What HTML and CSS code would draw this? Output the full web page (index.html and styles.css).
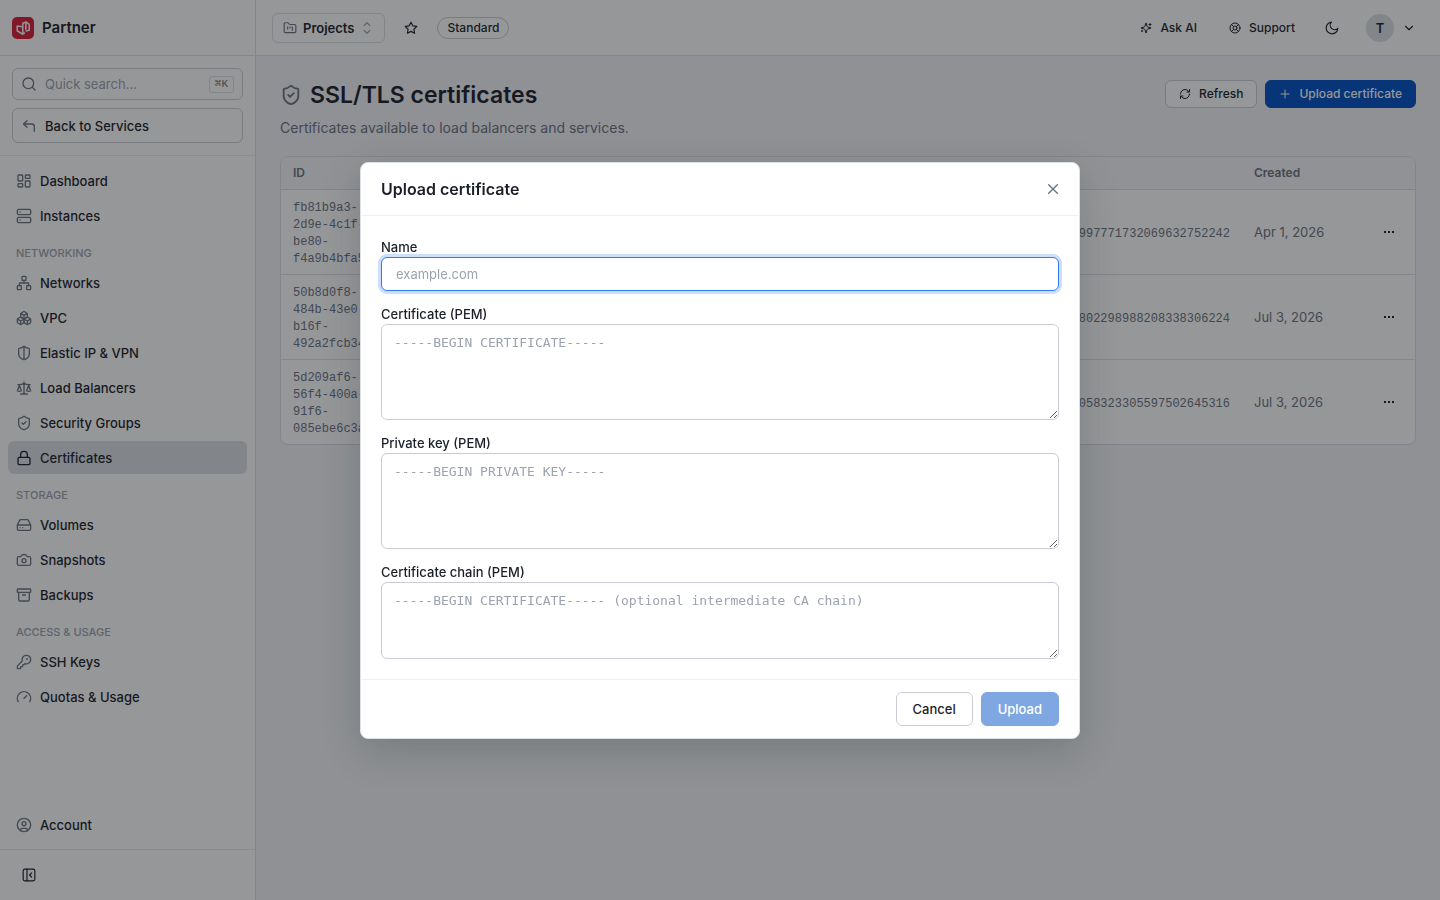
FILE: index.html
```html
<!DOCTYPE html>
<html lang="en">
<head>
<meta charset="utf-8">
<meta name="viewport" content="width=device-width, initial-scale=1">
<title>SSL/TLS certificates</title>
<link rel="stylesheet" href="styles.css">
</head>
<body>
<div class="app">
  <aside class="sidebar">
    <div class="brand">
      <svg class="brand-logo" viewBox="0 0 22 22" aria-hidden="true"><rect width="22" height="22" rx="5" fill="#d81e34"/><path d="M10.500 9.800 5.200 9v4.800l5.500 3.400 1.700-1.200M10.800 17V6.200L14 5l3.200 2.300v5.900l-3 .8M13.800 6v6.300" fill="none" stroke="#f4f4f6" stroke-width="1.600" stroke-linejoin="round" stroke-linecap="round"/></svg>
      <span>Partner</span>
    </div>
    <div class="side-tools">
      <label class="search">
        <svg class="icon" viewBox="0 0 24 24"><circle cx="11" cy="11" r="8"/><path d="m21 21-4.300-4.300"/></svg>
        <input type="search" placeholder="Quick search..." aria-label="Quick search">
        <kbd>⌘K</kbd>
      </label>
      <a class="back" href="#services">
        <svg class="icon" viewBox="0 0 24 24"><path d="M20 20v-7a4 4 0 0 0-4-4H4"/><path d="M9 14 4 9l5-5"/></svg>
        Back to Services
      </a>
    </div>
    <nav class="nav">
      <a class="nav-item" href="#dashboard"><svg class="icon" viewBox="0 0 24 24"><rect x="3" y="3" width="7" height="9" rx="1"/><rect x="14" y="3" width="7" height="5" rx="1"/><rect x="14" y="12" width="7" height="9" rx="1"/><rect x="3" y="16" width="7" height="5" rx="1"/></svg>Dashboard</a>
      <a class="nav-item" href="#instances"><svg class="icon" viewBox="0 0 24 24"><rect x="2" y="2" width="20" height="8" rx="2"/><rect x="2" y="14" width="20" height="8" rx="2"/><path d="M6 6h.01M6 18h.01"/></svg>Instances</a>
      <h2 class="nav-label">Networking</h2>
      <a class="nav-item" href="#networks"><svg class="icon" viewBox="0 0 24 24"><rect x="16" y="16" width="6" height="6" rx="1"/><rect x="2" y="16" width="6" height="6" rx="1"/><rect x="9" y="2" width="6" height="6" rx="1"/><path d="M5 16v-3a1 1 0 0 1 1-1h12a1 1 0 0 1 1 1v3M12 12V8"/></svg>Networks</a>
      <a class="nav-item" href="#vpc"><svg class="icon" viewBox="0 0 24 24"><path d="M2.970 12.920A2 2 0 0 0 2 14.630v3.240a2 2 0 0 0 .97 1.710l3 1.800a2 2 0 0 0 2.060 0L12 19v-5.500l-5-3-4.030 2.420Z"/><path d="m7 16.500-4.740-2.850M7 16.500l5-3M7 16.500v5.170M12 13.500V19l3.970 2.380a2 2 0 0 0 2.060 0l3-1.800a2 2 0 0 0 .97-1.710v-3.240a2 2 0 0 0-.97-1.710L17 10.500l-5 3ZM17 16.500l-5-3M17 16.500l4.740-2.850M17 16.500v5.170"/><path d="M7.970 4.420A2 2 0 0 0 7 6.130v4.370l5 3 5-3V6.130a2 2 0 0 0-.97-1.710l-3-1.800a2 2 0 0 0-2.060 0l-3 1.800ZM12 8 7.260 5.150M12 8l4.740-2.850M12 13.500V8"/></svg>VPC</a>
      <a class="nav-item" href="#vpn"><svg class="icon" viewBox="0 0 24 24"><path d="M20 13c0 5-3.500 7.500-7.660 8.950a1 1 0 0 1-.67-.01C7.500 20.500 4 18 4 13V6a1 1 0 0 1 1-1c2 0 4.500-1.200 6.240-2.720a1.170 1.170 0 0 1 1.520 0C14.510 3.810 17 5 19 5a1 1 0 0 1 1 1zM12 22V2"/></svg>Elastic IP &amp; VPN</a>
      <a class="nav-item" href="#balancers"><svg class="icon" viewBox="0 0 24 24"><path d="m16 16 3-8 3 8c-.87.65-1.920 1-3 1s-2.130-.35-3-1ZM2 16l3-8 3 8c-.87.65-1.920 1-3 1s-2.130-.35-3-1ZM7 21h10M12 3v18M3 7h2c2 0 5-1 7-2 2 1 5 2 7 2h2"/></svg>Load Balancers</a>
      <a class="nav-item" href="#security"><svg class="icon" viewBox="0 0 24 24"><path d="M20 13c0 5-3.500 7.500-7.660 8.950a1 1 0 0 1-.67-.01C7.500 20.500 4 18 4 13V6a1 1 0 0 1 1-1c2 0 4.500-1.200 6.240-2.720a1.170 1.170 0 0 1 1.520 0C14.510 3.810 17 5 19 5a1 1 0 0 1 1 1z"/><path d="m9 12 2 2 4-4"/></svg>Security Groups</a>
      <a class="nav-item active" aria-current="page" href="#certificates"><svg class="icon" viewBox="0 0 24 24"><rect x="3" y="11" width="18" height="11" rx="2"/><path d="M7 11V7a5 5 0 0 1 10 0v4"/></svg>Certificates</a>
      <h2 class="nav-label">Storage</h2>
      <a class="nav-item" href="#volumes"><svg class="icon" viewBox="0 0 24 24"><path d="M22 12H2M5.450 5.110 2 12v6a2 2 0 0 0 2 2h16a2 2 0 0 0 2-2v-6l-3.450-6.890A2 2 0 0 0 16.760 4H7.240a2 2 0 0 0-1.790 1.110zM6 16h.01M10 16h.01"/></svg>Volumes</a>
      <a class="nav-item" href="#snapshots"><svg class="icon" viewBox="0 0 24 24"><path d="M14.500 4h-5L7 7H4a2 2 0 0 0-2 2v9a2 2 0 0 0 2 2h16a2 2 0 0 0 2-2V9a2 2 0 0 0-2-2h-3z"/><circle cx="12" cy="13" r="3"/></svg>Snapshots</a>
      <a class="nav-item" href="#backups"><svg class="icon" viewBox="0 0 24 24"><rect x="2" y="3" width="20" height="5" rx="1"/><path d="M4 8v11a2 2 0 0 0 2 2h12a2 2 0 0 0 2-2V8M10 12h4"/></svg>Backups</a>
      <h2 class="nav-label">Access &amp; Usage</h2>
      <a class="nav-item" href="#keys"><svg class="icon" viewBox="0 0 24 24"><path d="M2.590 17.410A2 2 0 0 0 2 18.830V21a1 1 0 0 0 1 1h3a1 1 0 0 0 1-1v-1a1 1 0 0 1 1-1h1a1 1 0 0 0 1-1v-1a1 1 0 0 1 1-1h.17a2 2 0 0 0 1.410-.59l.82-.81a6.500 6.500 0 1 0-4-4z"/><circle cx="16.500" cy="7.500" r=".5"/></svg>SSH Keys</a>
      <a class="nav-item" href="#quotas"><svg class="icon" viewBox="0 0 24 24"><path d="m12 14 4-4M3.340 19a10 10 0 1 1 17.320 0"/></svg>Quotas &amp; Usage</a>
      <a class="nav-item nav-account" href="#account"><svg class="icon" viewBox="0 0 24 24"><circle cx="12" cy="12" r="10"/><circle cx="12" cy="10" r="3"/><path d="M7 20.660V19a2 2 0 0 1 2-2h6a2 2 0 0 1 2 2v1.660"/></svg>Account</a>
    </nav>
    <div class="side-foot">
      <button class="icon-btn" aria-label="Collapse sidebar"><svg class="icon icon-14" viewBox="0 0 24 24"><rect x="2" y="2" width="20" height="20" rx="3"/><path d="M8.500 2v20M16.500 8.500 13 12l3.500 3.500"/></svg></button>
    </div>
  </aside>

  <div class="main">
    <header class="topbar">
      <button class="project">
        <svg class="icon icon-14" viewBox="0 0 24 24"><path d="M4 20h16a2 2 0 0 0 2-2V8a2 2 0 0 0-2-2h-7.930a2 2 0 0 1-1.660-.9l-.82-1.200A2 2 0 0 0 7.930 3H4a2 2 0 0 0-2 2v13c0 1.100.9 2 2 2ZM8 10v4M12 10v2M16 10v6"/></svg>
        Projects
        <svg class="icon icon-14 muted" viewBox="0 0 24 24"><path d="m7 8 5-5 5 5M7 16l5 5 5-5"/></svg>
      </button>
      <button class="icon-btn star" aria-label="Add to favourites"><svg class="icon icon-14" viewBox="0 0 24 24"><path d="m12 2 3.090 6.260L22 9.270l-5 4.870 1.180 6.880L12 17.770l-6.180 3.250L7 14.140 2 9.270l6.910-1.010z"/></svg></button>
      <span class="badge">Standard</span>
      <div class="top-actions">
        <button class="ghost"><svg class="icon icon-12" viewBox="0 0 24 24"><path d="M9.940 15.500A2 2 0 0 0 8.500 14.060l-6.140-1.580a.5.5 0 0 1 0-.96L8.500 9.940A2 2 0 0 0 9.940 8.500l1.580-6.140a.5.5 0 0 1 .96 0l1.580 6.140a2 2 0 0 0 1.440 1.440l6.140 1.580a.5.5 0 0 1 0 .96l-6.140 1.580a2 2 0 0 0-1.440 1.440l-1.580 6.140a.5.5 0 0 1-.96 0zM20 3v4M22 5h-4M4 17v2M5 18H3"/></svg>Ask AI</button>
        <button class="ghost"><svg class="icon icon-12" viewBox="0 0 24 24"><circle cx="12" cy="12" r="10"/><circle cx="12" cy="12" r="4"/><path d="m4.930 4.930 4.240 4.240M14.830 9.170l4.240-4.240M14.830 14.830l4.240 4.240M9.170 14.830l-4.240 4.240"/></svg>Support</button>
        <button class="icon-btn" aria-label="Toggle dark mode"><svg class="icon icon-14" viewBox="0 0 24 24"><path d="M11 2a7.500 7.500 0 0 0 11 10.500A10 10 0 1 1 11 2Z"/></svg></button>
        <button class="user" aria-label="User menu"><span class="avatar">T</span><svg class="icon icon-14" viewBox="0 0 24 24"><path d="m6 9 6 6 6-6"/></svg></button>
      </div>
    </header>

    <main class="content">
      <div class="page-head">
        <div>
          <h1><svg class="icon icon-22" viewBox="0 0 24 24"><path d="M20 13c0 5-3.500 7.500-7.660 8.950a1 1 0 0 1-.67-.01C7.500 20.500 4 18 4 13V6a1 1 0 0 1 1-1c2 0 4.500-1.200 6.240-2.720a1.170 1.170 0 0 1 1.520 0C14.510 3.810 17 5 19 5a1 1 0 0 1 1 1z"/><path d="m9 12 2 2 4-4"/></svg>SSL/TLS certificates</h1>
          <p>Certificates available to load balancers and services.</p>
        </div>
        <div class="head-actions">
          <button class="btn btn-small"><svg class="icon icon-12" viewBox="0 0 24 24"><path d="M3 12a9 9 0 0 1 9-9 9.750 9.750 0 0 1 6.740 2.740L21 8M21 3v5h-5M21 12a9 9 0 0 1-9 9 9.750 9.750 0 0 1-6.740-2.740L3 16M8 16H3v5"/></svg>Refresh</button>
          <button class="btn btn-small btn-primary"><svg class="icon icon-12" viewBox="0 0 24 24"><path d="M4 12h16M12 4v16"/></svg>Upload certificate</button>
        </div>
      </div>
      <div class="table-card">
        <table>
          <thead><tr><th class="col-id">ID</th><th></th><th class="col-date">Created</th><th class="col-menu"></th></tr></thead>
          <tbody>
            <tr><td class="id">fb81b9a3-2d9e-4c1f-be80-f4a9b4bfa5</td><td class="serial">997771732069632752242</td><td>Apr 1, 2026</td><td class="menu"><button class="icon-btn" aria-label="Row actions"><svg class="dots" viewBox="0 0 12 4"><path d="M1 1h2v2H1zM5 1h2v2H5zM9 1h2v2H9z"/></svg></button></td></tr>
            <tr><td class="id">50b8d0f8-484b-43e0-b16f-492a2fcb34</td><td class="serial">802298988208338306224</td><td>Jul 3, 2026</td><td class="menu"><button class="icon-btn" aria-label="Row actions"><svg class="dots" viewBox="0 0 12 4"><path d="M1 1h2v2H1zM5 1h2v2H5zM9 1h2v2H9z"/></svg></button></td></tr>
            <tr><td class="id">5d209af6-56f4-400a-91f6-085ebe6c3a</td><td class="serial">058323305597502645316</td><td>Jul 3, 2026</td><td class="menu"><button class="icon-btn" aria-label="Row actions"><svg class="dots" viewBox="0 0 12 4"><path d="M1 1h2v2H1zM5 1h2v2H5zM9 1h2v2H9z"/></svg></button></td></tr>
          </tbody>
        </table>
      </div>
    </main>
  </div>
</div>

<div class="overlay">
  <form class="modal" role="dialog" aria-modal="true" aria-labelledby="modal-title">
    <header class="modal-head">
      <h2 id="modal-title">Upload certificate</h2>
      <button type="button" class="close" aria-label="Close"><svg class="icon" viewBox="0 0 24 24"><path d="M18.500 5.500l-13 13M5.500 5.500l13 13"/></svg></button>
    </header>
    <div class="modal-body">
      <div class="field"><label for="name">Name</label><input id="name" type="text" placeholder="example.com" autofocus></div>
      <div class="field"><label for="cert">Certificate (PEM)</label><textarea id="cert" rows="4" placeholder="-----BEGIN CERTIFICATE-----"></textarea></div>
      <div class="field"><label for="key">Private key (PEM)</label><textarea id="key" rows="4" placeholder="-----BEGIN PRIVATE KEY-----"></textarea></div>
      <div class="field"><label for="chain">Certificate chain (PEM)</label><textarea id="chain" rows="3" placeholder="-----BEGIN CERTIFICATE----- (optional intermediate CA chain)"></textarea></div>
    </div>
    <footer class="modal-foot">
      <button type="button" class="btn">Cancel</button>
      <button type="submit" class="btn btn-primary" disabled>Upload</button>
    </footer>
  </form>
</div>
</body>
</html>
```
FILE: styles.css
```css
* { box-sizing: border-box; }

body {
  margin: 0;
  font: 500 13px/20px Inter, "Liberation Sans", sans-serif;
  color: #1c1f2a;
  background: #f4f5f7;
}

button, input, textarea { font: inherit; color: inherit; }
button { cursor: pointer; padding: 0; border: 0; background: none; }
a { color: inherit; text-decoration: none; }
h1, h2, p { margin: 0; }

.icon {
  width: 16px;
  height: 16px;
  flex: none;
  fill: none;
  stroke: currentColor;
  stroke-width: 2;
  stroke-linecap: round;
  stroke-linejoin: round;
}
.icon-12 { width: 12px; height: 12px; }
.icon-14 { width: 14px; height: 14px; }
.icon-22 { width: 22px; height: 22px; }

.app { display: flex; min-height: 100vh; }

/* Sidebar */
.sidebar {
  width: 256px;
  flex: none;
  display: flex;
  flex-direction: column;
  background: #fff;
  border-right: 1px solid #dcdfe3;
}
.brand {
  height: 56px;
  display: flex;
  align-items: center;
  gap: 8px;
  padding: 0 12px;
  border-bottom: 1px solid #dcdfe3;
  font-size: 15px;
  font-weight: 600;
}
.brand-logo { width: 22px; height: 22px; }
.side-tools {
  display: flex;
  flex-direction: column;
  gap: 8px;
  padding: 12px;
  border-bottom: 1px solid #e9ebee;
}
.search, .back {
  display: flex;
  align-items: center;
  gap: 8px;
  padding: 0 8px;
  border: 1px solid #c9cdd3;
  border-radius: 6px;
}
.search { height: 32px; }
.search .icon, .back .icon, .nav-item .icon { color: #6b7280; }
.search input {
  flex: 1;
  min-width: 0;
  padding: 0;
  border: 0;
  outline: 0;
  background: none;
  font-weight: 400;
}
.search input::placeholder { color: #9ca3af; }
kbd {
  padding: 0 5px;
  border: 1px solid #dcdfe3;
  border-radius: 3px;
  font: 11px/15px "Liberation Mono", monospace;
  color: #6b7280;
}
.back { height: 35px; }

.nav {
  flex: 1;
  display: flex;
  flex-direction: column;
  gap: 2px;
  padding: 8px;
}
.nav-item {
  height: 33px;
  display: flex;
  align-items: center;
  gap: 8px;
  padding: 0 8px;
  border-radius: 6px;
}
.nav-item.active { background: #dce1e4; }
.nav-item.active .icon { color: #1c1f2a; }
.nav-label {
  padding: 10px 8px 2px;
  font-size: 11px;
  line-height: 18px;
  font-weight: 500;
  text-transform: uppercase;
  color: #9ca3af;
}
.nav-account { margin-top: auto; }
.side-foot {
  height: 51px;
  padding: 9px 13px;
  border-top: 1px solid #e9ebee;
}
.icon-btn {
  width: 32px;
  height: 32px;
  display: inline-flex;
  align-items: center;
  justify-content: center;
}

/* Top bar */
.main { flex: 1; min-width: 0; }
.topbar {
  height: 56px;
  display: flex;
  align-items: center;
  padding: 0 16px;
  background: #fff;
  border-bottom: 1px solid #dcdfe3;
}
.project {
  height: 30px;
  display: flex;
  align-items: center;
  gap: 6px;
  padding: 0 10px;
  border: 1px solid #dcdfe3;
  border-radius: 6px;
  font-weight: 600;
}
.project .icon { color: #6b7280; }
.project .muted { color: #9ca3af; }
.star { margin: 0 10px; }
.badge {
  padding: 0 9px;
  border: 1px solid #c9cdd3;
  border-radius: 11px;
  font-size: 12px;
}
.top-actions {
  margin-left: auto;
  display: flex;
  align-items: center;
  gap: 10px;
}
.ghost {
  height: 28px;
  display: flex;
  align-items: center;
  gap: 8px;
  padding: 0 11px;
  font-size: 12px;
}
.user {
  display: flex;
  align-items: center;
  gap: 8px;
  padding: 0 8px;
}
.avatar {
  width: 28px;
  border-radius: 50%;
  line-height: 28px;
  font-weight: 600;
  background: #dce1e4;
}

/* Page */
.content { padding: 24px; }
.page-head {
  display: flex;
  align-items: flex-start;
  justify-content: space-between;
}
h1 {
  display: flex;
  align-items: center;
  gap: 8px;
  font-size: 23px;
  line-height: 30px;
  font-weight: 600;
}
h1 .icon { color: #6b7280; }
.page-head p {
  margin-top: 8px;
  font-size: 14px;
  font-weight: 400;
  color: #6b7280;
}
.head-actions { display: flex; gap: 8px; }
.btn {
  height: 34px;
  display: flex;
  align-items: center;
  gap: 8px;
  padding: 0 16px;
  border: 1px solid #c9cdd3;
  border-radius: 6px;
  background: #fff;
}
.btn-small { height: 28px; padding: 0 13px; font-size: 12px; }
.btn-primary { color: #fff; background: #0050c3; border-color: #0050c3; }
.btn:disabled { opacity: .5; }

.table-card {
  margin-top: 18px;
  border: 1px solid #dcdfe3;
  border-radius: 8px;
  overflow: hidden;
  background: #fff;
}
table {
  width: 100%;
  table-layout: fixed;
  border-collapse: separate;
  border-spacing: 0;
}
th {
  height: 32px;
  padding: 0 12px;
  background: #f6f7f8;
  text-align: left;
  font-size: 12px;
  font-weight: 600;
  color: #6b7280;
}
td {
  height: 85px;
  padding: 8px 12px;
  border-top: 1px solid #dcdfe3;
  font-size: 13px;
  font-weight: 400;
  color: #6b7280;
}
.col-id { width: 116px; }
.col-date { width: 120px; }
.col-menu { width: 53px; }
.id, .serial {
  padding-top: 10px;
  padding-bottom: 6px;
  font: 12px/17px "Liberation Mono", monospace;
}
.serial { text-align: right; }
.menu { padding: 0 11px; }
.dots { width: 12px; height: 4px; fill: #1c1f2a; }

/* Dialog */
.overlay {
  position: fixed;
  inset: 0;
  display: flex;
  align-items: center;
  justify-content: center;
  background: rgba(16, 18, 22, .44);
}
.modal {
  width: 720px;
  max-width: 92vw;
  border: 1px solid #dcdfe3;
  border-radius: 8px;
  background: #fff;
  box-shadow: 0 12px 40px rgba(16, 24, 32, .2);
}
.modal-head {
  height: 53px;
  display: flex;
  align-items: center;
  justify-content: space-between;
  padding: 0 18px 0 20px;
  border-bottom: 1px solid #eceef1;
}
.modal-head h2 { font-size: 16px; font-weight: 600; }
.close { display: flex; color: #6b7280; }
.modal-body {
  display: flex;
  flex-direction: column;
  gap: 12px;
  padding: 20px;
}
.field { display: flex; flex-direction: column; }
.field label { padding-top: 2px; line-height: 19px; }
.field input, .field textarea {
  width: 100%;
  border: 1px solid #c9cdd3;
  border-radius: 6px;
  outline: 0;
  background: #fff;
  font-weight: 400;
}
.field input { height: 34px; padding: 0 14px; }
.field textarea {
  min-height: 77px;
  padding: 8px 12px;
  font: 13px/1.5 "DejaVu Sans Mono", monospace;
  resize: vertical;
}
.field ::placeholder { color: #9ca3af; }
.field input:focus {
  border-color: #2f7bff;
  box-shadow: 0 0 0 3px #cddeff;
}
.modal-foot {
  display: flex;
  justify-content: flex-end;
  gap: 8px;
  padding: 12px 20px;
  border-top: 1px solid #eceef1;
}
```
